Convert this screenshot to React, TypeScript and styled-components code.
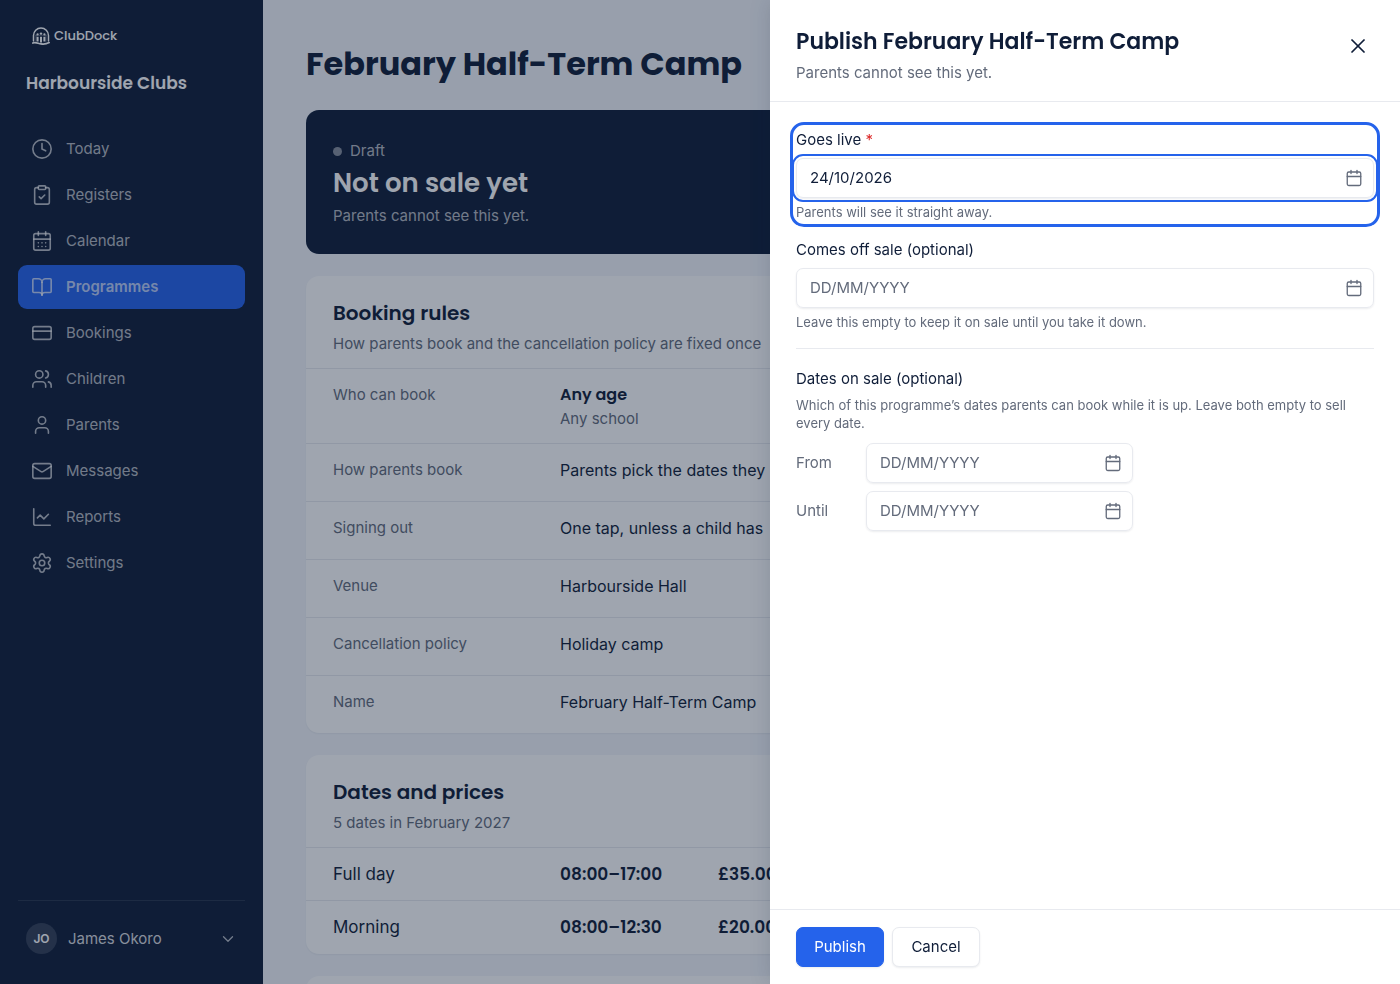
import React from "react";
import styled, { createGlobalStyle, css } from "styled-components";
import {
  BookOpen,
  Calendar,
  CalendarDays,
  ChartLine,
  ChevronDown,
  ClipboardCheck,
  Clock,
  CreditCard,
  Mail,
  Settings,
  User,
  Users,
  X,
} from "lucide-react";

const c = {
  navy: "#0f1d38",
  blue: "#2563eb",
  page: "#f4f6fb",
  white: "#ffffff",
  muted: "#636b7b",
  line: "#e8eaef",
  onNavy: "rgba(255, 255, 255, 0.7)",
};
const heading = `"Poppins", "Inter", sans-serif`;

const GlobalStyle = createGlobalStyle`
  *, *::before, *::after { box-sizing: border-box; }
  body {
    margin: 0;
    font-family: "Inter", sans-serif;
    font-size: 15px;
    line-height: 24px;
    color: ${c.navy};
    background: ${c.page};
  }
  h1, h2, h3, p, dl, dt, dd, ul, fieldset { margin: 0; padding: 0; border: 0; }
  button, input { font: inherit; color: inherit; }
`;

const Shell = styled.div`
  display: flex;
  height: 100vh;
  overflow: hidden;
`;

const Sidebar = styled.aside`
  flex: 0 0 263px;
  display: flex;
  flex-direction: column;
  padding: 24px 18px;
  background: ${c.navy};
  color: ${c.white};
`;

const Brand = styled.a`
  display: flex;
  align-items: center;
  gap: 4px;
  height: 24px;
  padding-left: 14px;
  font-family: ${heading};
  font-size: 13px;
  font-weight: 500;
  color: inherit;
  text-decoration: none;
`;

const OrgName = styled.p`
  margin: 23px 8px 0;
  font-family: ${heading};
  font-size: 17px;
  font-weight: 600;
`;

const NavList = styled.ul`
  display: flex;
  flex-direction: column;
  gap: 2px;
  margin-top: 32px;
  list-style: none;
`;

const NavLink = styled.a<{ $active?: boolean }>`
  display: flex;
  align-items: center;
  gap: 13px;
  height: 44px;
  padding: 0 13px;
  border-radius: 9px;
  color: ${c.onNavy};
  text-decoration: none;
  ${(p) =>
    p.$active &&
    css`
      background: ${c.blue};
      font-weight: 600;
    `}
`;

const Account = styled.button`
  display: flex;
  align-items: center;
  gap: 11px;
  margin-top: auto;
  padding: 22px 8px 6px;
  border: 0;
  border-top: 1px solid rgba(255, 255, 255, 0.1);
  background: none;
  color: ${c.onNavy};
  text-align: left;
`;

const Avatar = styled.span`
  display: grid;
  place-items: center;
  width: 31px;
  height: 31px;
  border-radius: 50%;
  background: rgba(255, 255, 255, 0.15);
  color: ${c.white};
  font-size: 12px;
  font-weight: 600;
`;

const AccountName = styled.span`
  flex: 1;
  color: rgba(255, 255, 255, 0.85);
`;

const Main = styled.main`
  flex: 1;
  min-width: 0;
  display: flex;
  flex-direction: column;
  gap: 22px;
  padding: 40px 43px 0;
  overflow: hidden;
  > * { flex-shrink: 0; }
`;

const PageTitle = styled.h1`
  font-family: ${heading};
  font-size: 32px;
  line-height: 48px;
  font-weight: 700;
`;

const Hero = styled.section`
  padding: 29px 27px 26px;
  border-radius: 13px;
  background: ${c.navy};
  color: ${c.onNavy};
`;

const Status = styled.p`
  display: flex;
  align-items: center;
  gap: 8px;
  &::before {
    content: "";
    width: 9px;
    height: 9px;
    border-radius: 50%;
    background: rgba(255, 255, 255, 0.5);
  }
`;

const HeroTitle = styled.h2`
  margin: 2px 0 3px;
  font-family: ${heading};
  font-size: 26px;
  line-height: 36px;
  font-weight: 600;
  color: ${c.white};
`;

const Card = styled.section`
  min-height: 120px;
  border-radius: 13px;
  background: ${c.white};
  box-shadow: 0 1px 2px rgba(15, 29, 56, 0.06);
`;

const CardHeader = styled.header`
  padding: 22px 27px 12px;
  white-space: nowrap;
`;

const CardTitle = styled.h2`
  margin-bottom: 4px;
  font-family: ${heading};
  font-size: 20px;
  line-height: 30px;
  font-weight: 600;
`;

const Muted = styled.p`
  color: ${c.muted};
`;

const RuleRow = styled.div`
  display: grid;
  grid-template-columns: 227px 1fr;
  min-height: 58px;
  padding: 14px 27px 12px;
  border-top: 1px solid ${c.line};
`;

const RuleLabel = styled.dt`
  color: ${c.muted};
`;

const RuleValue = styled.dd`
  font-size: 16px;
`;

const Strong = styled.p`
  font-family: ${heading};
  font-size: 16px;
  font-weight: 600;
`;

const PriceTable = styled.table`
  width: 100%;
  border-collapse: collapse;
  font-size: 17px;
`;

const PriceName = styled.th`
  width: 254px;
  height: 53px;
  padding: 0 0 0 27px;
  border-top: 1px solid ${c.line};
  font-weight: 400;
  text-align: left;
`;

const PriceCell = styled.td<{ $width?: number }>`
  width: ${(p) => (p.$width ? `${p.$width}px` : "auto")};
  padding: 0;
  border-top: 1px solid ${c.line};
  font-family: ${heading};
  font-weight: 600;
`;

const Backdrop = styled.div`
  position: fixed;
  inset: 0;
  display: flex;
  justify-content: flex-end;
  background: rgba(15, 29, 56, 0.4);
`;

const Drawer = styled.section`
  display: flex;
  flex-direction: column;
  width: 45%;
  background: ${c.white};
  box-shadow: 0 0 20px rgba(15, 29, 56, 0.15);
`;

const DrawerHeader = styled.header`
  display: flex;
  justify-content: space-between;
  align-items: flex-start;
  padding: 24px 26px 16px;
  border-bottom: 1px solid ${c.line};
`;

const DrawerTitle = styled.h2`
  margin-bottom: 1px;
  font-family: ${heading};
  font-size: 22px;
  line-height: 36px;
  font-weight: 600;
`;

const CloseButton = styled.button`
  display: grid;
  place-items: center;
  width: 32px;
  height: 44px;
  padding: 0;
  border: 0;
  background: none;
`;

const DrawerBody = styled.form`
  flex: 1;
  padding: 26px;
`;

const Field = styled.div<{ $highlight?: boolean }>`
  margin-bottom: 17px;
  border-radius: 8px;
  ${(p) =>
    p.$highlight &&
    css`
      outline: 3px solid ${c.blue};
      outline-offset: 3px;
    `}
`;

const FieldLabel = styled.label`
  display: block;
  margin-bottom: 6px;
`;

const Legend = styled.legend`
  float: left;
  width: 100%;
  margin-bottom: 5px;
  padding: 0;
`;

const Required = styled.span`
  color: #dc2626;
`;

const Hint = styled.p`
  clear: both;
  font-size: 13px;
  line-height: 18px;
  color: ${c.muted};
`;

const DateBox = styled.div<{ $focused?: boolean }>`
  display: flex;
  align-items: center;
  height: 40px;
  padding: 0 10px 0 13px;
  border: 1px solid ${c.line};
  border-radius: 7px;
  box-shadow: 0 1px 2px rgba(15, 29, 56, 0.08);
  color: ${c.muted};
  ${(p) =>
    p.$focused &&
    css`
      outline: 2px solid ${c.blue};
      outline-offset: 2px;
    `}
  & + ${Hint} {
    margin-top: 5px;
  }
`;

const DateText = styled.input`
  flex: 1;
  min-width: 0;
  padding: 0;
  border: 0;
  outline: 0;
  background: none;
  color: ${c.navy};
  &::placeholder {
    color: ${c.muted};
    opacity: 1;
  }
`;

const SaleDates = styled.fieldset`
  padding-top: 18px;
  border-top: 1px solid ${c.line};
`;

const RangeRow = styled.div`
  display: grid;
  grid-template-columns: 70px 267px;
  align-items: center;
  margin-top: 8px;
  color: ${c.muted};
  ${Hint} + & {
    margin-top: 11px;
  }
`;

const DrawerFooter = styled.footer`
  display: flex;
  gap: 8px;
  padding: 17px 26px;
  border-top: 1px solid ${c.line};
`;

const Button = styled.button<{ $primary?: boolean }>`
  height: 40px;
  width: 88px;
  padding: 0;
  border: 1px solid ${(p) => (p.$primary ? c.blue : c.line)};
  border-radius: 7px;
  background: ${(p) => (p.$primary ? c.blue : c.white)};
  color: ${(p) => (p.$primary ? c.white : c.navy)};
  box-shadow: 0 1px 2px rgba(15, 29, 56, 0.08);
`;

const nav = [
  { label: "Today", icon: Clock },
  { label: "Registers", icon: ClipboardCheck },
  { label: "Calendar", icon: CalendarDays },
  { label: "Programmes", icon: BookOpen },
  { label: "Bookings", icon: CreditCard },
  { label: "Children", icon: Users },
  { label: "Parents", icon: User },
  { label: "Messages", icon: Mail },
  { label: "Reports", icon: ChartLine },
  { label: "Settings", icon: Settings },
];

const rules = [
  { label: "How parents book", value: "Parents pick the dates they" },
  { label: "Signing out", value: "One tap, unless a child has" },
  { label: "Venue", value: "Harbourside Hall" },
  { label: "Cancellation policy", value: "Holiday camp" },
  { label: "Name", value: "February Half-Term Camp" },
];

const prices = [
  { name: "Full day", time: "08:00–17:00", price: "£35.00" },
  { name: "Morning", time: "08:00–12:30", price: "£20.00" },
];

function Logo() {
  return (
    <svg width="18" height="19" viewBox="0 0 18 19" fill="none" stroke="currentColor" strokeLinecap="round" aria-hidden="true">
      <path d="M1.5 14V8.500a7.500 7.500 0 0 1 15 0V14" strokeWidth="1.5" />
      <path d="M4 8.200h10M4 14.200V8.200M14 14.200V8.200" strokeWidth="0.6" opacity="0.6" />
      <path d="M5.600 9.800v4.800M9 9.800v5.600M12.400 9.800v4.800" strokeWidth="2" strokeLinecap="butt" />
      <circle cx="5.6" cy="7.4" r="1.1" fill="currentColor" stroke="none" />
      <circle cx="9" cy="6.6" r="1.2" fill="currentColor" stroke="none" />
      <circle cx="12.4" cy="7.4" r="1.1" fill="currentColor" stroke="none" />
      <path d="M.8 16c3-1.200 5 .4 8.200.9s5.500.1 8.200-1.300" strokeWidth="1.7" />
    </svg>
  );
}

function DateInput({ id, value, focused }: { id: string; value?: string; focused?: boolean }) {
  return (
    <DateBox $focused={focused}>
      <DateText id={id} type="text" placeholder="DD/MM/YYYY" defaultValue={value} />
      <Calendar size={18} strokeWidth={1.75} aria-hidden="true" />
    </DateBox>
  );
}

export default function App() {
  return (
    <>
      <GlobalStyle />
      <Shell>
        <Sidebar>
          <Brand href="#">
            <Logo />
            ClubDock
          </Brand>
          <OrgName>Harbourside Clubs</OrgName>
          <nav>
            <NavList>
              {nav.map(({ label, icon: Icon }) => (
                <li key={label}>
                  <NavLink href="#" $active={label === "Programmes"}>
                    <Icon size={22} strokeWidth={1.75} aria-hidden="true" />
                    {label}
                  </NavLink>
                </li>
              ))}
            </NavList>
          </nav>
          <Account type="button">
            <Avatar>JO</Avatar>
            <AccountName>James Okoro</AccountName>
            <ChevronDown size={18} strokeWidth={1.75} aria-hidden="true" />
          </Account>
        </Sidebar>

        <Main>
          <PageTitle>February Half-Term Camp</PageTitle>
          <Hero>
            <Status>Draft</Status>
            <HeroTitle>Not on sale yet</HeroTitle>
            <p>Parents cannot see this yet.</p>
          </Hero>

          <Card>
            <CardHeader>
              <CardTitle>Booking rules</CardTitle>
              <Muted>How parents book and the cancellation policy are fixed once</Muted>
            </CardHeader>
            <dl>
              <RuleRow>
                <RuleLabel>Who can book</RuleLabel>
                <dd>
                  <Strong>Any age</Strong>
                  <Muted>Any school</Muted>
                </dd>
              </RuleRow>
              {rules.map((rule) => (
                <RuleRow key={rule.label}>
                  <RuleLabel>{rule.label}</RuleLabel>
                  <RuleValue>{rule.value}</RuleValue>
                </RuleRow>
              ))}
            </dl>
          </Card>

          <Card>
            <CardHeader>
              <CardTitle>Dates and prices</CardTitle>
              <Muted>5 dates in February 2027</Muted>
            </CardHeader>
            <PriceTable>
              <tbody>
                {prices.map((row) => (
                  <tr key={row.name}>
                    <PriceName scope="row">{row.name}</PriceName>
                    <PriceCell $width={158}>{row.time}</PriceCell>
                    <PriceCell>{row.price}</PriceCell>
                  </tr>
                ))}
              </tbody>
            </PriceTable>
          </Card>

          <Card />
        </Main>
      </Shell>

      <Backdrop>
        <Drawer role="dialog" aria-modal="true" aria-labelledby="drawer-title">
          <DrawerHeader>
            <div>
              <DrawerTitle id="drawer-title">Publish February Half-Term Camp</DrawerTitle>
              <Muted>Parents cannot see this yet.</Muted>
            </div>
            <CloseButton type="button" aria-label="Close">
              <X size={24} strokeWidth={1.75} aria-hidden="true" />
            </CloseButton>
          </DrawerHeader>

          <DrawerBody id="publish-form">
            <Field $highlight>
              <FieldLabel htmlFor="goes-live">
                Goes live <Required>*</Required>
              </FieldLabel>
              <DateInput id="goes-live" value="24/10/2026" focused />
              <Hint>Parents will see it straight away.</Hint>
            </Field>
            <Field>
              <FieldLabel htmlFor="off-sale">Comes off sale (optional)</FieldLabel>
              <DateInput id="off-sale" />
              <Hint>Leave this empty to keep it on sale until you take it down.</Hint>
            </Field>
            <SaleDates>
              <Legend>Dates on sale (optional)</Legend>
              <Hint>
                Which of this programme’s dates parents can book while it is up. Leave both empty to sell every date.
              </Hint>
              <RangeRow>
                <label htmlFor="sale-from">From</label>
                <DateInput id="sale-from" />
              </RangeRow>
              <RangeRow>
                <label htmlFor="sale-until">Until</label>
                <DateInput id="sale-until" />
              </RangeRow>
            </SaleDates>
          </DrawerBody>

          <DrawerFooter>
            <Button type="submit" form="publish-form" $primary>
              Publish
            </Button>
            <Button type="button">Cancel</Button>
          </DrawerFooter>
        </Drawer>
      </Backdrop>
    </>
  );
}
